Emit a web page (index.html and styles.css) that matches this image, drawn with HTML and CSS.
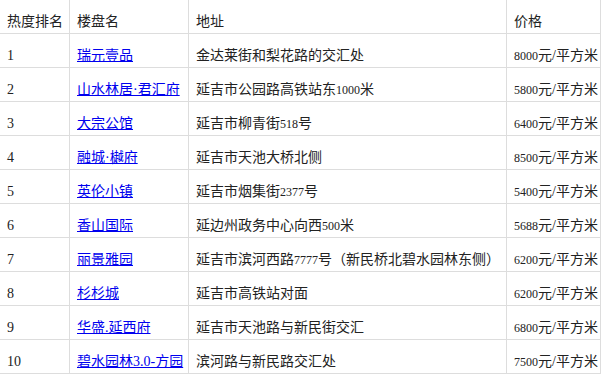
FILE: index.html
```html
<!DOCTYPE html>
<html lang="zh">
<head>
<meta charset="utf-8">
<title>热度排名</title>
<link rel="stylesheet" href="styles.css">
</head>
<body>
<table class="rank">
  <colgroup>
    <col class="c1"><col class="c2"><col class="c3"><col class="c4">
  </colgroup>
  <thead>
    <tr><th>热度排名</th><th>楼盘名</th><th>地址</th><th>价格</th></tr>
  </thead>
  <tbody>
    <tr><td>1</td><td><a href="#">瑞元壹品</a></td><td>金达莱街和梨花路的交汇处</td><td><span class="n">8000</span>元/平方米</td></tr>
    <tr><td>2</td><td><a href="#">山水林居·君汇府</a></td><td>延吉市公园路高铁站东<span class="n">1000</span>米</td><td><span class="n">5800</span>元/平方米</td></tr>
    <tr><td>3</td><td><a href="#">大宗公馆</a></td><td>延吉市柳青街<span class="n">518</span>号</td><td><span class="n">6400</span>元/平方米</td></tr>
    <tr><td>4</td><td><a href="#">融城·樾府</a></td><td>延吉市天池大桥北侧</td><td><span class="n">8500</span>元/平方米</td></tr>
    <tr><td>5</td><td><a href="#">英伦小镇</a></td><td>延吉市烟集街<span class="n">2377</span>号</td><td><span class="n">5400</span>元/平方米</td></tr>
    <tr><td>6</td><td><a href="#">香山国际</a></td><td>延边州政务中心向西<span class="n">500</span>米</td><td><span class="n">5688</span>元/平方米</td></tr>
    <tr><td>7</td><td><a href="#">丽景雅园</a></td><td>延吉市滨河西路<span class="n">7777</span>号（新民桥北碧水园林东侧）</td><td><span class="n">6200</span>元/平方米</td></tr>
    <tr><td>8</td><td><a href="#">杉杉城</a></td><td>延吉市高铁站对面</td><td><span class="n">6200</span>元/平方米</td></tr>
    <tr><td>9</td><td><a href="#">华盛.延西府</a></td><td>延吉市天池路与新民街交汇</td><td><span class="n">6800</span>元/平方米</td></tr>
    <tr><td>10</td><td><a href="#">碧水园林3.0-方园</a></td><td>滨河路与新民路交汇处</td><td><span class="n">7500</span>元/平方米</td></tr>
  </tbody>
</table>
</body>
</html>
```
FILE: styles.css
```css
html, body {
  margin: 0;
  padding: 0;
  background: #fff;
}
.rank {
  border-collapse: collapse;
  table-layout: fixed;
  width: 601px;
  margin: -1px 0 0 -1px;
  font-family: "Liberation Serif", "Noto Sans CJK SC", serif;
  font-size: 14px;
  color: #222;
}
.c1 { width: 70px; }
.c2 { width: 119px; }
.c3 { width: 318px; }
.c4 { width: 94px; }
.rank th,
.rank td {
  border: 1px solid #dddddd;
  height: 20px;
  line-height: 20px;
  padding: 12px 6px 1px 7px;
  text-align: left;
  font-weight: normal;
  white-space: nowrap;
  overflow: hidden;
}
.rank a {
  color: #0000ee;
  text-decoration: underline;
}
.n {
  font-size: 12px;
}
```
